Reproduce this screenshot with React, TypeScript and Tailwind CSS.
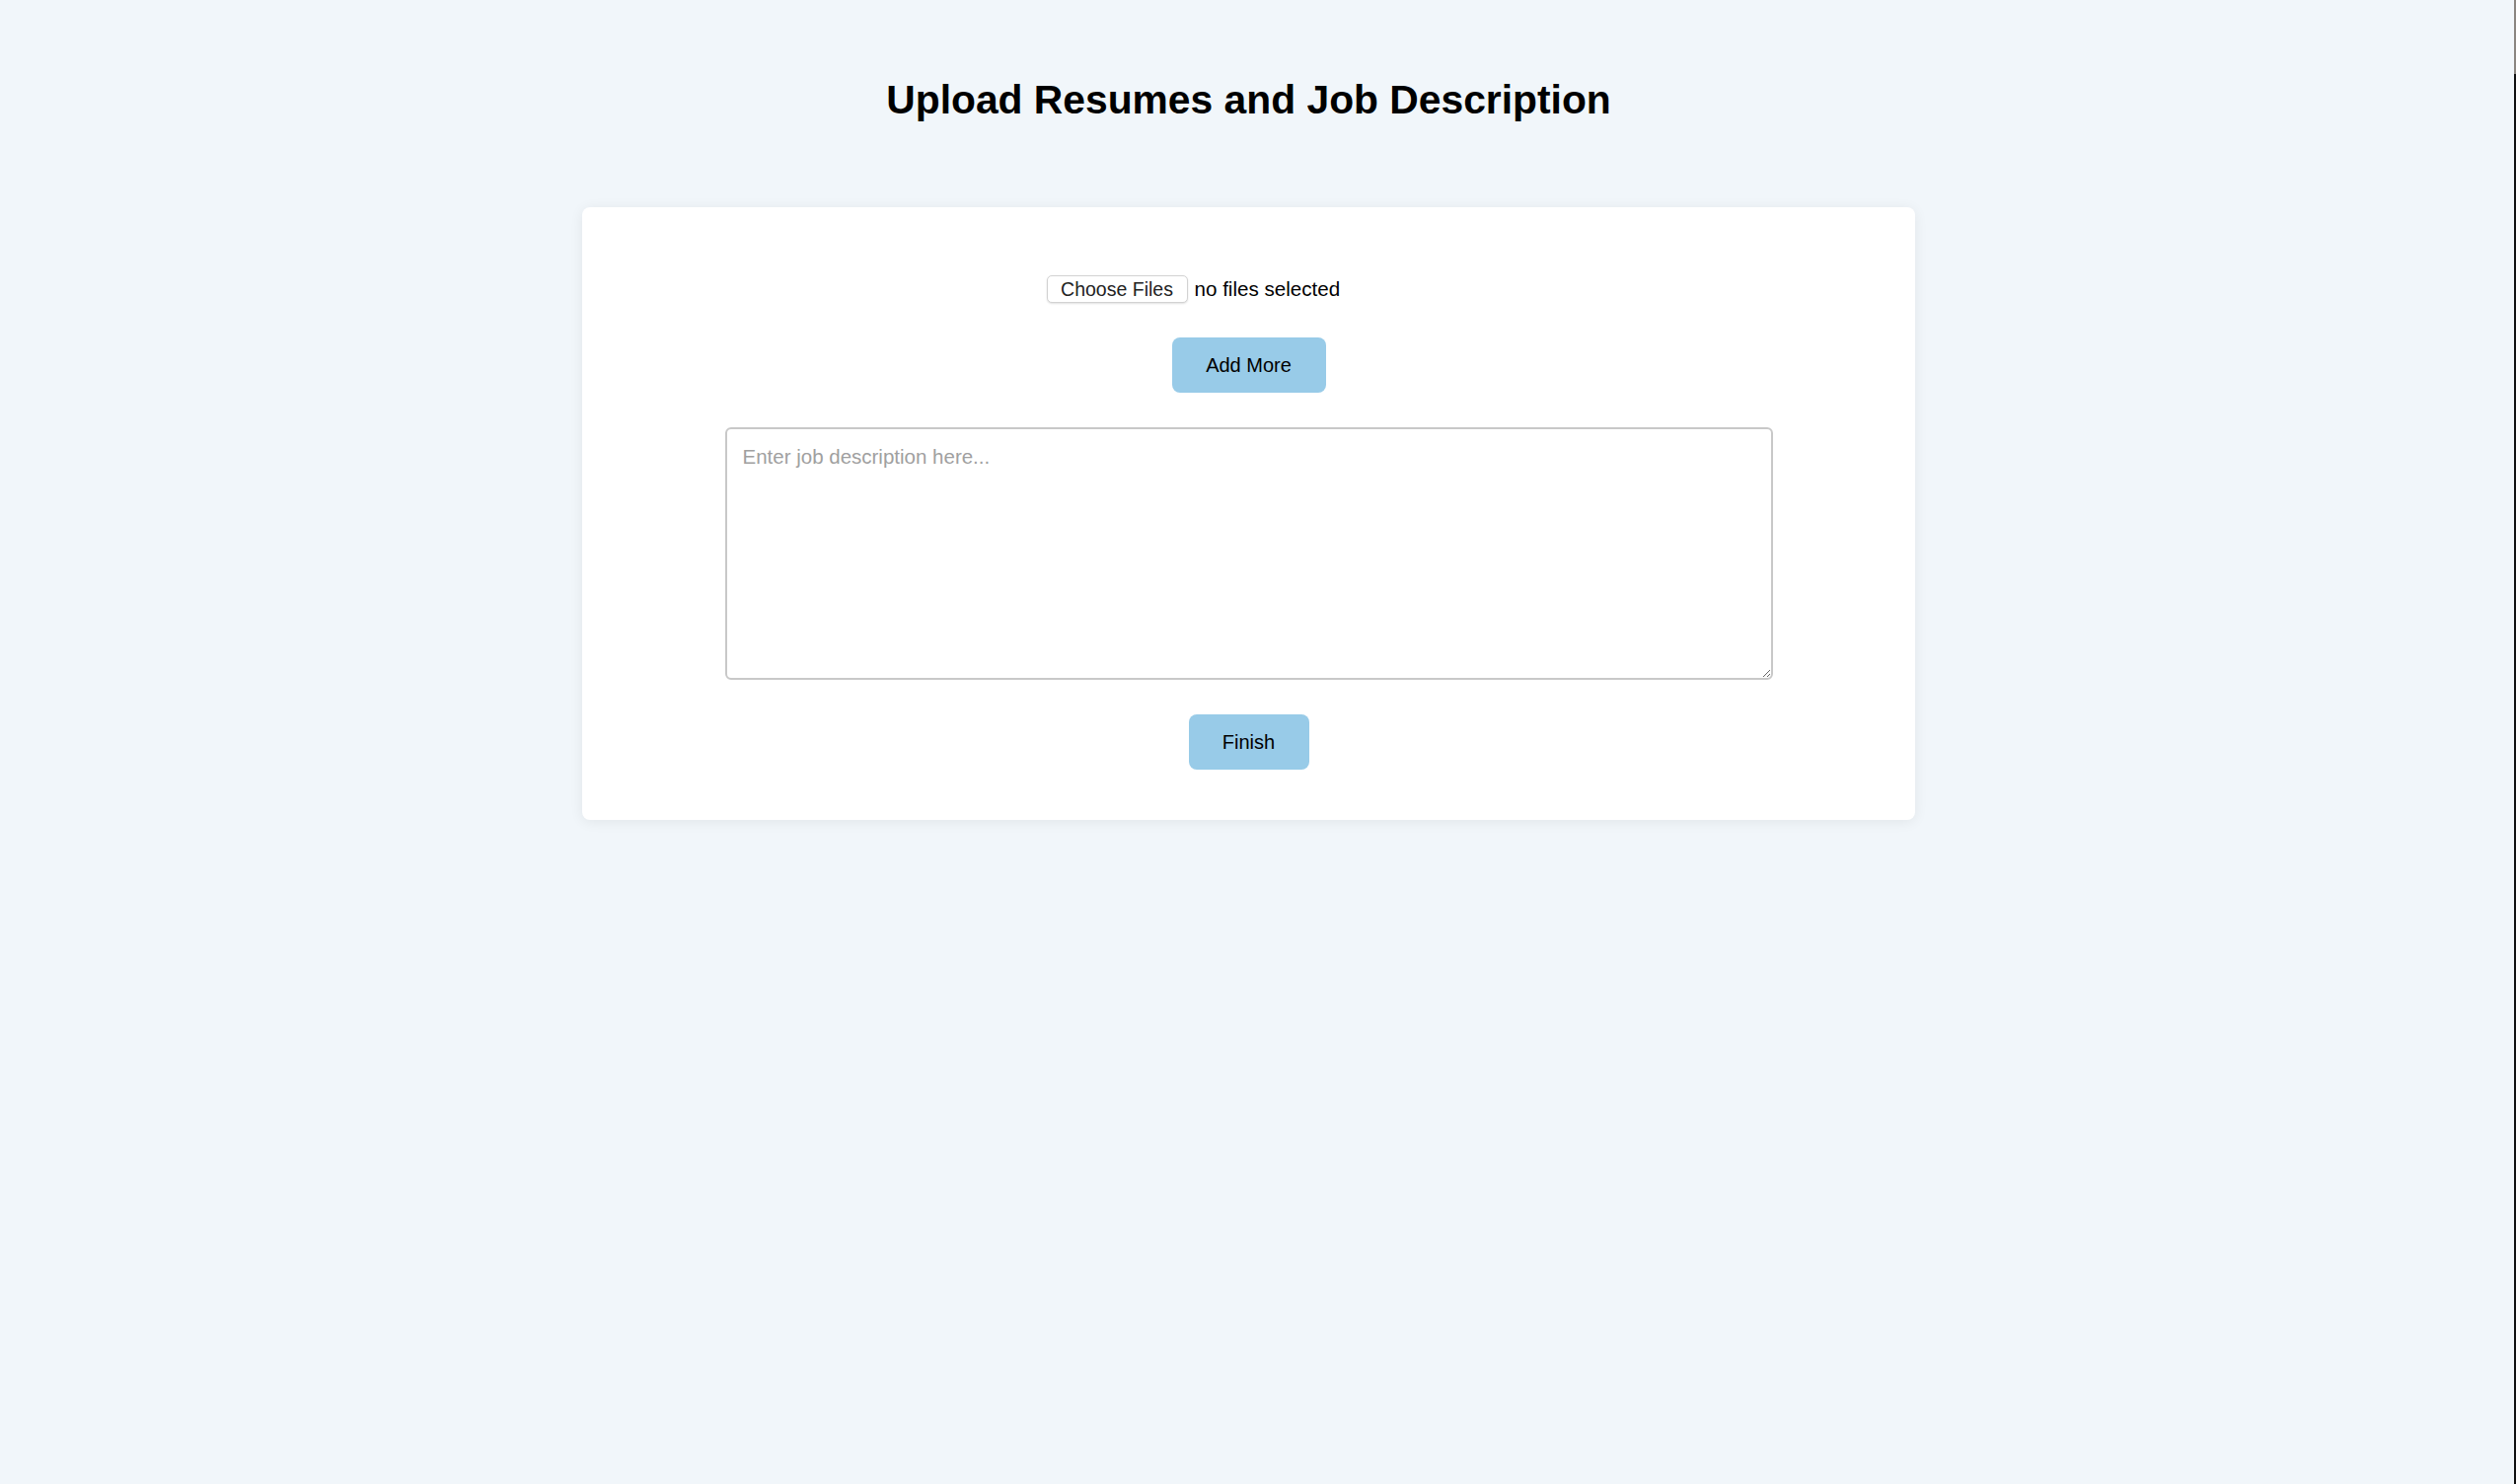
export default function App() {
  return (
    <div className="flex min-h-[1504px] w-full bg-[#f1f6fa] font-['Liberation_Sans',Arial,sans-serif] text-black">
      <main className="flex w-[2531px] flex-col items-center">
        <h1 className="mt-[81px] text-[40.8px] font-bold leading-none text-black">
          Upload Resumes and Job Description
        </h1>
        <div className="mt-[88px] flex w-[1351px] flex-col items-center rounded-lg bg-white pt-[69px] pb-[51px] shadow-[0_2px_14px_rgba(0,0,0,0.07)]">
          <div className="flex h-[28px] w-[410px] items-center">
            <button className="flex h-[28px] w-[143px] items-center justify-center rounded-[5px] border border-[#d2d2d2] bg-white pt-[2px] text-[19.5px] leading-none text-[#222] shadow-[0_1px_2px_rgba(0,0,0,0.12)]">
              Choose Files
            </button>
            <span className="ml-[7px] text-[20.6px] leading-none">no files selected</span>
          </div>
          <button className="mt-[35px] flex h-[56px] w-[156px] items-center justify-center rounded-lg bg-[#98cbe8] text-[20px] leading-none text-black">
            Add More
          </button>
          <textarea
            className="mt-[35px] h-[256px] w-[1062px] resize-y rounded-[6px] border-2 border-[#c8c8c8] bg-white px-4 pt-[13px] pb-4 text-[20.5px] text-black outline-none placeholder:text-[#a0a0a0]"
            placeholder="Enter job description here..."
          />
          <button className="mt-[35px] flex h-[56px] w-[122px] items-center justify-center rounded-lg bg-[#98cbe8] text-[20px] leading-none text-black">
            Finish
          </button>
        </div>
      </main>
      <div className="flex-1" />
      <div className="flex w-[2px] flex-col">
        <div className="h-[75px] bg-[#8a8580]" />
        <div className="flex-1 bg-[#111111]" />
      </div>
    </div>
  );
}
